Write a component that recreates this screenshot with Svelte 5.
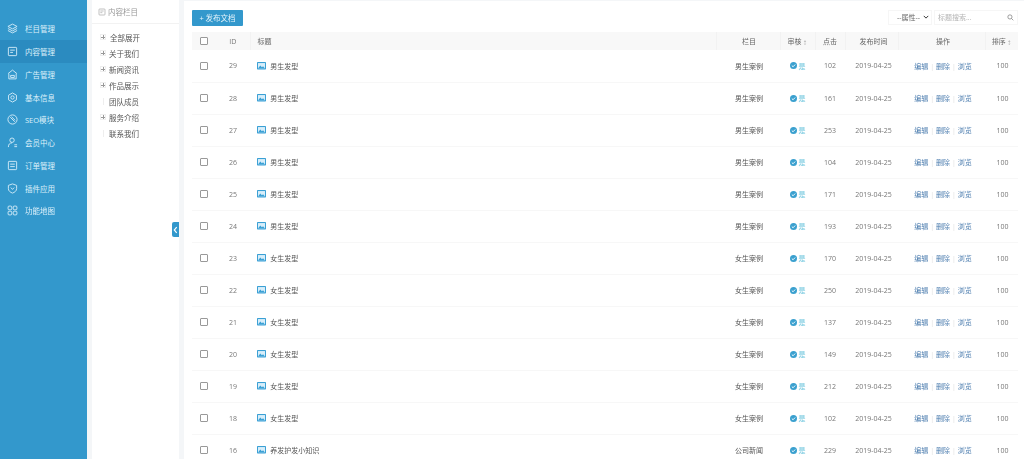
<script>
  const nav = [
    { t: '栏目管理', i: 'layers' }, { t: '内容管理', i: 'doc', on: true }, { t: '广告管理', i: 'ad' },
    { t: '基本信息', i: 'gear' }, { t: 'SEO模块', i: 'seo' }, { t: '会员中心', i: 'user' },
    { t: '订单管理', i: 'order' }, { t: '插件应用', i: 'plugin' }, { t: '功能地图', i: 'grid' }
  ];
  const tree = [
    { t: '全部展开', plus: true, root: true }, { t: '关于我们', plus: true }, { t: '新闻资讯', plus: true },
    { t: '作品展示', plus: true }, { t: '团队成员' }, { t: '服务介绍', plus: true }, { t: '联系我们' }
  ];
  const m = ['男生发型', '男生案例'], f = ['女生发型', '女生案例'];
  const rows = [
    [29, m, 102], [28, m, 161], [27, m, 253], [26, m, 104], [25, m, 171], [24, m, 193],
    [23, f, 170], [22, f, 250], [21, f, 137], [20, f, 149], [19, f, 212], [18, f, 102],
    [16, ['养发护发小知识', '公司新闻'], 229]
  ];
</script>

<div class="page">
  <aside class="nav">
    <ul>
      {#each nav as n}
        <li class:on={n.on}>
          <svg viewBox="0 0 12 12" class="ni">
            {#if n.i === 'layers'}
              <path d="M6 1.2 11 3.8 6 6.4 1 3.8zM1 6l5 2.6L11 6M1 8.2l5 2.6 5-2.6" />
            {:else if n.i === 'doc'}
              <rect x="1.5" y="1.5" width="9" height="9" rx=".8" /><path d="M3.5 4.5h5M3.5 7h3" />
            {:else if n.i === 'ad'}
              <path d="M1.2 5 6 1.2 10.8 5M2 5v5.8h8V5M4 7h4v2.2H4z" />
            {:else if n.i === 'gear'}
              <circle cx="6" cy="6" r="1.8" /><path d="M6 1 10.3 3.5v5L6 11 1.7 8.5v-5z" />
            {:else if n.i === 'seo'}
              <circle cx="6" cy="6" r="5" /><path d="M3.5 3.5 8.5 8.5M5 3l4 4" />
            {:else if n.i === 'user'}
              <circle cx="5.5" cy="3.5" r="2.4" /><path d="M1.5 11c0-3 1.5-4.6 4-4.6M8 8.5h3M8 10.5h3" />
            {:else if n.i === 'order'}
              <rect x="1.5" y="1.5" width="9" height="9" rx=".8" /><path d="M3.5 4.5h5M3.5 7.2h5" />
            {:else if n.i === 'plugin'}
              <path d="M6 1 10.5 2.6v3.6C10.5 8.6 8.4 10.2 6 11 3.6 10.2 1.5 8.6 1.5 6.2V2.6z" /><path d="M4.2 5 6 7l1.8-2" />
            {:else}
              <rect x="1.2" y="1.2" width="4" height="4" rx="1" /><rect x="6.8" y="1.2" width="4" height="4" rx="1" /><rect x="1.2" y="6.8" width="4" height="4" rx="1" /><rect x="6.8" y="6.8" width="4" height="4" rx="1" />
            {/if}
          </svg>
          <span>{n.t}</span>
        </li>
      {/each}
    </ul>
  </aside>

  <section class="panel">
    <div class="ptitle">
      <svg viewBox="0 0 12 12" class="pi"><rect x="1.5" y="1.5" width="9" height="9" rx="1" /><path d="M3.5 4.5h5M3.5 7h3" /></svg>
      <span>内容栏目</span>
    </div>
    <ul class="tree">
      {#each tree as n}
        <li class:root={n.root}>
          {#if n.plus}<i class="plus"></i>{:else}<i class="dot"></i>{/if}
          <span>{n.t}</span>
        </li>
      {/each}
    </ul>
    <button class="collapse" aria-label="收起">
      <svg viewBox="0 0 6 10"><path d="M4.5 1.5 1.5 5l3 3.5" /></svg>
    </button>
  </section>

  <main class="main">
    <div class="bar">
      <button class="add">+ 发布文档</button>
      <div class="tools">
        <span class="sel">--属性--<svg viewBox="0 0 8 5"><path d="M1 1l3 3 3-3" /></svg></span>
        <span class="search">
          <span>标题搜索...</span>
          <svg viewBox="0 0 10 10"><circle cx="4.2" cy="4.2" r="3" /><path d="M6.5 6.5 9 9" /></svg>
        </span>
      </div>
    </div>
    <table>
      <colgroup>
        <col class="c1" /><col class="c2" /><col /><col class="c4" /><col class="c5" /><col class="c6" /><col class="c7" /><col class="c8" /><col class="c9" />
      </colgroup>
      <thead>
        <tr>
          <th class="ck"><i class="box"></i></th>
          <th class="id">ID</th>
          <th class="left">标题</th>
          <th class="cat">栏目</th>
          <th>审核<em>↕</em></th>
          <th>点击</th>
          <th class="date">发布时间</th>
          <th class="op">操作</th>
          <th>排序<em>↕</em></th>
        </tr>
      </thead>
      <tbody>
        {#each rows as r}
          <tr>
            <td class="ck"><i class="box"></i></td>
            <td class="num">{r[0]}</td>
            <td class="left title">
              <svg viewBox="0 0 11 9" class="img"><rect width="11" height="9" rx=".8" fill="#3aa0d5" /><rect x="1.2" y="1.2" width="8.6" height="6.6" fill="#d8eefa" /><path d="M1.2 7.8 4 4.2l2 2.2 1.4-1.2 2.4 2.6z" fill="#3aa0d5" /></svg>
              <span>{r[1][0]}</span>
            </td>
            <td class="cat">{r[1][1]}</td>
            <td class="ok">
              <svg viewBox="0 0 10 10" class="chk"><circle cx="5" cy="5" r="5" fill="#3aa0cf" /><path d="M2.6 5.1 4.4 6.8 7.4 3.6" /></svg><span>是</span>
            </td>
            <td class="num">{r[2]}</td>
            <td class="num date">2019-04-25</td>
            <td class="ops"><a href="#a">编辑</a><b>|</b><a href="#a">删除</a><b>|</b><a href="#a">浏览</a></td>
            <td class="num sort">100</td>
          </tr>
        {/each}
      </tbody>
    </table>
  </main>
</div>

<style>
  :global(body) { margin: 0; background: #f4f6f8; overflow: hidden; }
  ul { list-style: none; margin: 0; padding: 0; }
  .page {
    display: flex; height: 459px; overflow: hidden;
    font-family: "Open Sans", "Noto Sans CJK SC", sans-serif; color: #555;
    filter: blur(.3px);
  }
  .nav { width: 87px; flex: none; background: #3398cc; padding-top: 17.5px; box-sizing: border-box; }
  .nav li { height: 22.75px; display: flex; align-items: center; color: #dcf0fa; font-size: 7.5px; }
  .nav li.on { background: #2b8bc0; }
  .ni { width: 11px; height: 11px; margin: 0 7px 0 7px; fill: none; stroke: #d5ecf8; stroke-width: 1; }
  .panel { width: 87px; flex: none; margin: 0 5px; background: #fff; position: relative; }
  .ptitle {
    height: 23px; display: flex; align-items: center; padding-left: 6px; border-bottom: 1px solid #f2f2f2;
    font-size: 7.5px; color: #999;
  }
  .pi { width: 8px; height: 8px; margin-right: 2px; fill: none; stroke: #999; stroke-width: .9; }
  .tree { padding-top: 5px; }
  .tree li { height: 16px; display: flex; align-items: center; padding-left: 8px; font-size: 7.5px; color: #555; }
  .tree li.root span { margin-left: 1px; }
  .plus {
    width: 4px; height: 4px; margin-right: 3px; flex: none; border: 1px solid #eee; box-sizing: content-box;
    background:
      linear-gradient(#999, #999) center / 4px 1px no-repeat,
      linear-gradient(#999, #999) center / 1px 4px no-repeat;
  }
  .dot { width: 1px; height: 7px; margin: 0 5px 0 3px; flex: none; background: #eee; }
  .collapse {
    position: absolute; right: 0; top: 222px; width: 7px; height: 15px; padding: 0; border: 0;
    border-radius: 2px 0 0 2px; background: #3398cc; display: flex; align-items: center; justify-content: center;
  }
  .collapse svg { width: 5px; height: 8px; fill: none; stroke: #fff; stroke-width: 1.5; }
  .main { flex: 1; min-width: 0; background: #fff; padding: 0 6px 0 8px; margin-top: 1px; }
  .bar { height: 31px; display: flex; align-items: flex-start; justify-content: space-between; }
  .add {
    margin-top: 8.5px; width: 51px; height: 16px; padding: 0; border: 0; border-radius: 1px;
    background: #3398cc; color: #e6f4fb; font: inherit; font-size: 7.5px;
  }
  .tools { display: flex; gap: 2px; margin-top: 8.5px; }
  .sel, .search {
    height: 15px; box-sizing: border-box; border: 1px solid #f6f6f6; display: flex; align-items: center;
    font-size: 7px;
  }
  .sel { width: 44px; padding-left: 8px; color: #666; justify-content: space-between; padding-right: 2px; }
  .sel svg { width: 6px; height: 4px; fill: none; stroke: #333; stroke-width: 1.3; }
  .search { width: 84px; padding: 0 3px; color: #b5b5b5; justify-content: space-between; }
  .search svg { width: 7px; height: 7px; fill: none; stroke: #777; stroke-width: 1; }
  table { width: 826px; table-layout: fixed; border-collapse: collapse; font-size: 7px; }
  .c1 { width: 24px; } .c2 { width: 34px; } .c4 { width: 64px; } .c5 { width: 35px; }
  .c6 { width: 30px; } .c7 { width: 53px; } .c8 { width: 87px; } .c9 { width: 33px; }
  th {
    height: 18px; padding: 0; background: #f8f8f8; border-left: 1px solid #f2f2f2; font-weight: 400; color: #666; font-size: 7px;
  }
  th.ck, th.id { border-left: 0; }
  th em { font-style: normal; font-size: 5px; color: #aaa; margin-left: 1px; }
  td { height: 32px; padding: 0; text-align: center; border-bottom: 1px solid #f7f7f7; color: #555; box-sizing: border-box; }
  .left { text-align: left; padding-left: 7px; }
  .num { color: #777; }
  .id { color: #777; }
  .date { padding-left: 4px; }
  .op, .ops { padding-left: 3px; }
  .cat, .sort { padding-left: 2px; }
  .box { display: block; width: 5.5px; height: 5.5px; margin: 0 auto; border: 1px solid #999; border-radius: 1px; background: #fff; }
  .title { color: #555; }
  .title span, .img { vertical-align: middle; }
  .img { width: 9px; height: 7.5px; margin-right: 2.5px; }
  .ok { color: #6cc5dd; }
  .chk { width: 7px; height: 7px; vertical-align: middle; margin-right: 2px; }
  .chk path { fill: none; stroke: #fff; stroke-width: 1.3; }
  .ok span { vertical-align: middle; }
  .ops a { color: #4f7fb0; text-decoration: none; }
  .ops b { color: #ddd; font-weight: 400; margin: 0 2px; }
</style>
